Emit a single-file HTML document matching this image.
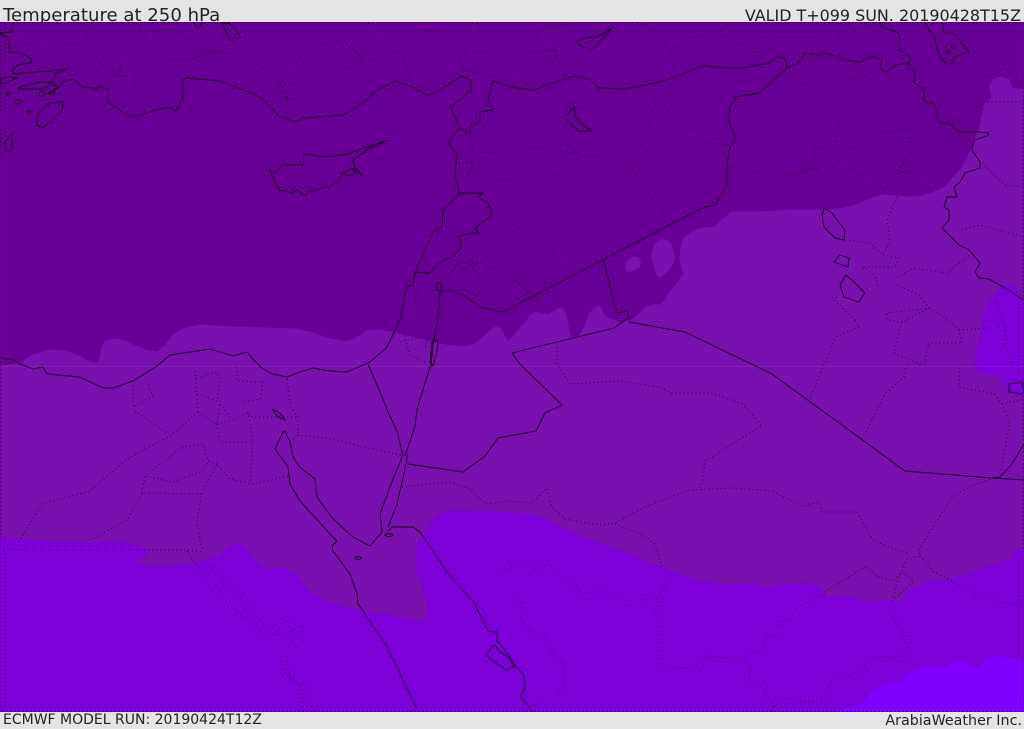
<!DOCTYPE html>
<html><head><meta charset="utf-8"><style>
html,body{margin:0;padding:0;background:#e4e4e4}
#w{position:relative;width:1024px;height:729px;overflow:hidden;background:#e4e4e4;font-family:"DejaVu Sans","Liberation Sans",sans-serif;color:#222}
.t{position:absolute;white-space:nowrap;line-height:1}
svg{position:absolute;left:0;top:22px}
</style></head><body><div id="w">
<div class="t" style="left:3px;top:6.5px;font-size:18.1px">Temperature at 250 hPa</div>
<div class="t" style="right:3px;top:8px;font-size:15.95px">VALID T+099 SUN. 20190428T15Z</div>
<div class="t" style="left:3px;top:713px;font-size:14px">ECMWF MODEL RUN: 20190424T12Z</div>
<div class="t" style="right:2px;top:714px;font-size:14.3px">ArabiaWeather Inc.</div>
<svg width="1024" height="690" viewBox="0 22 1024 690">
<rect x="0" y="22" width="1024" height="690" fill="#680095"/>
<polygon fill="#7a10ad" stroke="#7a10ad" stroke-linejoin="round" points="0,366 20,363 32,355 50,350 65,351 77,355 90,362 97,364 100,358 102,347 106,341 113,339 122,340 133,345 145,350 157,352 165,346 172,336 180,330 190,327 200,325 215,326 233,327 265,328 293,329 310,332 330,339 347,342 357,338 367,331 378,330 390,332 410,337 427,341 445,345 463,347 473,345 480,340 490,331 497,326 501,329 503,333 507,342 512,338 518,331 525,323 530,316 535,312 542,314 549,315 556,310 562,308 565,313 567,320 569,331 570,337 575,339 579,337 585,325 590,313 595,308 600,306 602,310 604,315 610,319 619,322 629,322 637,316 645,308 652,305 660,305 665,300 669,293 676,285 684,273 681,265 680,257 681,247 684,238 693,232 702,228 715,227 723,219 732,212 762,212 795,210 829,210 845,208 859,204 870,199 882,195 895,196 909,197 922,196 932,193 945,187 953,178 962,168 971,150 979,130 982,116 985,103 989,101 992,97 990,91 990,85 994,79 999,77 1006,78 1009,80 1011,85 1012,88 1016,89 1024,89 1024,712 0,712"/>
<polygon fill="#7a10ad" points="625,267 628,260 632,257 637,257 641,261 640,267 635,270 629,272 626,271"/>
<polygon fill="#7a10ad" points="651,257 652,250 655,243 660,240 664,239 669,241 672,245 674,252 675,258 673,264 669,270 664,275 659,278 656,274 654,267"/>
<polygon fill="#7d00d9" stroke="#7d00d9" stroke-linejoin="round" points="0,537 33,541 80,543 117,542 135,545 147,549 147,554 141,558 135,562 150,566 177,566 195,563 213,559 221,555 227,549 232,545 237,543 243,546 248,551 255,561 263,569 272,570 283,568 292,572 300,579 306,587 313,594 325,601 337,606 360,610 383,614 402,618 420,622 425,621 429,611 426,600 423,587 418,575 416,564 416,553 418,544 427,530 437,516 445,512 457,511 485,512 512,513 530,515 542,518 565,530 585,539 606,546 629,554 650,563 669,571 692,579 708,582 725,585 752,584 769,588 785,585 802,583 812,584 819,587 823,592 827,596 845,596 867,602 885,601 905,601 905,592 917,588 929,581 949,580 969,574 990,566 1012,559 1015,551 1024,547 1024,712 0,712"/>
<polygon fill="#7d00d9" stroke="#7d00d9" stroke-linejoin="round" points="975,366 977,350 982,327 985,310 993,298 1002,287 1012,285 1024,300 1024,397 1012,392 1005,384 1000,378 995,374 985,373 979,371 975,366"/>
<polygon fill="#7f00ff" stroke="#7f00ff" stroke-linejoin="round" points="840,711 852,707 862,704 867,698 872,692 882,686 900,682 906,677 912,672 925,668 945,668 950,664 955,661 965,663 972,667 979,668 983,664 987,657 1000,657 1024,660 1024,712 840,712"/>
<rect x="0" y="366" width="1024" height="1" fill="#fff" opacity=".08"/>

<g fill="none" stroke="#000" stroke-width="1" stroke-linejoin="round" stroke-dasharray="1 3" opacity=".8">
<rect x=".5" y="22.5" width="1023" height="689"/>
<polyline points="13,30 25,43 50,48 77,43 107,68 117,76 137,76 150,62 187,60 222,50 224,52 250,58 277,80 287,93 288,110 287,118"/>
<polyline points="92,23 93,33 80,43"/>
<polyline points="137,23 140,33 170,30 190,40 200,52 222,50 222,33"/>
<polyline points="117,75 132,43 147,33"/>
<polyline points="138,75 132,87 118,103"/>
<polyline points="277,88 287,72 307,50 343,39 353,50 365,62 333,72 310,80 280,88"/>
<polyline points="280,90 288,100 313,95 305,83"/>
<polyline points="365,62 400,50 402,38 420,30 440,32"/>
<polyline points="368,23 380,37 383,53"/>
<polyline points="400,52 413,82"/>
<polyline points="477,23 478,37 460,55 463,70 500,77"/>
<polyline points="473,52 512,55 555,50 565,80"/>
<polyline points="534,37 545,27 572,24"/>
<polyline points="534,37 555,50"/>
<polyline points="669,50 659,33 635,22"/>
<polyline points="669,50 675,73"/>
<polyline points="669,50 692,37 719,33 729,22"/>
<polyline points="719,33 739,45 759,37 819,38 822,27"/>
<polyline points="839,37 875,23"/>
<polyline points="754,60 759,45"/>
<polyline points="512,75 535,90"/>
<polyline points="472,133 472,163 483,152 512,155 522,146 579,154 627,162 647,137 655,100 639,90"/>
<polyline points="597,90 595,100 575,110"/>
<polyline points="655,100 689,128 709,143 732,145"/>
<polyline points="579,154 577,167 564,178 545,168 512,180 477,182 468,175 473,163 458,163"/>
<polyline points="627,162 637,177 652,200 675,222"/>
<polyline points="565,130 565,143 577,153"/>
<polyline points="512,223 539,243 549,253 579,270"/>
<polyline points="512,273 532,290"/>
<polyline points="477,250 470,262 480,280 478,296 465,290"/>
<polyline points="441,288 458,263 480,263 510,276 538,300"/>
<polyline points="419,290 412,310 404,335 410,355 425,362"/>
<polyline points="400,342 428,335 425,350"/>
<polyline points="727,165 775,177 820,168 795,172 794,190 809,203 819,208"/>
<polyline points="787,68 799,83 812,87 834,77 855,80 855,70 885,87 860,103 837,123 837,140 814,152 820,168"/>
<polyline points="860,137 910,128 910,153 885,190 875,182 839,163 835,153 855,147 860,137"/>
<polyline points="900,103 905,125"/>
<polyline points="902,172 917,173 932,192"/>
<polyline points="897,197 887,220 890,243 882,255 899,258 895,267 862,267 875,275 879,288"/>
<polyline points="845,240 870,243 882,255"/>
<polyline points="897,277 914,268 947,273 972,253"/>
<polyline points="897,285 919,295 929,308 887,313 887,320 902,322 929,308 942,315 959,330 962,343 929,343 924,365"/>
<polyline points="902,322 895,347 894,353 922,365"/>
<polyline points="855,320 832,298 840,297"/>
<polyline points="855,320 859,327 835,337 825,365"/>
<polyline points="959,330 1005,327 995,300"/>
<polyline points="1005,327 1005,343 1012,365"/>
<polyline points="962,230 979,225 1024,237"/>
<polyline points="982,163 1005,185 1024,187"/>
<polyline points="952,120 985,102 1024,102"/>
<polyline points="939,57 969,67 985,78 1005,68 1024,85"/>
<polyline points="0,550 187,550 202,552"/>
<polyline points="15,549 42,504 90,491 127,459 170,436 198,412"/>
<polyline points="133,381 133,407 153,396 147,382"/>
<polyline points="135,411 168,434"/>
<polyline points="195,371 197,397 198,412"/>
<polyline points="197,394 217,401 220,381 217,372 195,379"/>
<polyline points="220,401 217,424 198,412"/>
<polyline points="217,424 220,442 252,442"/>
<polyline points="217,424 233,420 248,412 250,417 297,417"/>
<polyline points="220,404 233,420"/>
<polyline points="263,382 260,399 243,402"/>
<polyline points="237,367 237,381 263,382"/>
<polyline points="248,412 253,441 250,482"/>
<polyline points="287,379 290,406 298,417 298,434 290,442"/>
<polyline points="298,435 333,439 360,446 403,456"/>
<polyline points="288,476 253,484 230,479 217,464 202,492 197,521 202,552"/>
<polyline points="217,464 208,461 203,444 183,447 145,476 173,482 203,471 209,461"/>
<polyline points="145,476 142,493 202,494"/>
<polyline points="142,493 128,519 87,542"/>
<polyline points="207,564 233,591 263,624 270,627 287,621 302,627 303,641 287,657 290,677 307,687 313,711"/>
<polyline points="187,551 197,567 213,581 227,604 257,627 267,636 293,631 293,641 280,656 287,676 300,687 303,711"/>
<polyline points="402,487 450,482 470,489 485,504 512,501 532,503 547,488 552,507 565,519 599,525 615,523 645,507 689,490 732,488 772,491 802,506 819,502 822,512 857,512 874,541 909,554 899,577 892,601 890,614 905,636 909,656 872,657 855,674 832,679 824,701 802,702 782,697 772,711"/>
<polyline points="557,347 557,364 570,384 619,381 659,387 672,393 712,393 742,404 762,426 735,442 705,461 702,484 697,490"/>
<polyline points="615,524 645,536 655,544 662,567 672,577 659,597 655,614 662,621 662,664 665,670 695,666 709,656 739,659 764,649 764,637 775,637 779,622 789,621 799,607 825,592 865,567 879,577 892,581 902,572 914,581 892,601"/>
<polyline points="739,659 750,666 750,682 762,687 774,707"/>
<polyline points="657,599 625,601 602,591 582,594 572,581 555,574 550,564 535,569 522,564 512,567 500,574"/>
<polyline points="512,600 524,604 522,621 529,631 545,639 555,659 564,662 564,694 549,697 532,706"/>
<polyline points="990,479 965,489 952,497 935,524 919,549 920,556 909,559"/>
<polyline points="920,556 934,572 949,579 969,592 1002,602 1024,606"/>
<polyline points="1000,474 1010,424 1002,404 995,394 959,387 960,364"/>
<polyline points="1002,404 1024,399"/>
<polyline points="862,439 885,394 904,377 907,364"/>
<polyline points="810,399 824,364"/>
</g>

<g fill="none" stroke="#000" stroke-width=".9" stroke-linejoin="round" opacity=".9">
<polyline points="13,22 12,32 0,33 8,38 10,52 20,53 25,55 32,60 30,63 17,65 12,70 13,74 23,73 50,71 68,69 55,74 53,82 35,83 20,87 18,89 43,89 53,83 57,87 50,93 58,88 63,82 73,79 82,87 93,88 95,91 100,86 108,90 108,103 117,108 122,112 133,117 140,115 163,108 173,108 175,112 183,98 183,80 188,78 220,81 257,95 267,103 280,117 295,122 303,118 343,115 355,108 363,103 377,90 395,81 407,85 427,95 437,92 443,88 462,76 470,80 472,90 450,107 460,127 448,143 457,153 455,177 460,193 443,210 442,227 433,232 415,272 413,285 407,286 400,320 387,347 370,362 347,372 330,371 313,368 300,372 287,377 272,374 262,368 252,358 247,352 233,356 210,349 190,352 170,355 157,366 133,381 113,388 103,388 80,377 47,374 43,367 33,369 20,364 13,360 0,358"/>
<polyline points="368,364 385,404 388,412 397,431 403,456"/>
<polyline points="430,367 417,409 415,426 405,456"/>
<polyline points="408,454 405,469 397,504 388,527"/>
<polyline points="402,457 393,479 380,514 382,532 370,546 353,537 333,519 317,497 315,479 300,467 293,457 290,442 285,431 283,432 275,449 288,467 290,484 300,501 330,534 337,541 332,546 333,551 350,574 357,594 358,604 387,647 417,709"/>
<polyline points="388,531 392,527 413,527 420,532 437,557 450,576 473,601 488,631 497,632 497,641 505,650 512,661 524,676 525,689 520,696 529,707 532,711"/>
<polygon points="487,654 491,648 495,645 500,652 505,655 510,660 515,668 511,667 507,670 495,663 487,656"/>
<polyline points="512,353 614,328 629,317 627,311 617,313 614,303 603,258"/>
<polyline points="503,312 702,208 715,205 727,185 727,163 730,148 735,137 729,120 730,107 736,97 759,93 787,68"/>
<polyline points="503,312 480,307 463,295 448,290 440,293 437,327 433,343 431,367"/>
<polygon points="432,342 438,340 437,352 433,366 430,362"/>
<polyline points="414,272 430,273 438,263 450,258 462,247 458,237 473,233 479,233 475,228 492,215 488,203 478,197 483,193 460,193"/>
<polyline points="458,128 470,133 470,125 480,122 480,112 493,110 488,98 493,81 512,87 534,90 552,83 574,76 590,80 599,88 625,89 655,83 675,77 702,66 725,68 742,68 769,63 779,56 786,60 787,68 797,64 806,53 819,55 825,53 845,60 860,62 872,56 882,60 880,68 885,73 895,65 909,63"/>
<polyline points="880,22 882,27 899,33 900,50 910,57 909,68 915,72 914,82 924,90 924,102 934,103 939,123 949,123 959,132 977,132 989,133 987,136 974,140 972,150 980,162 980,168 965,173 960,182 954,187 957,197 947,197 944,207 949,210 949,220 942,228 959,245 969,250 980,263 975,272 979,278 989,279 1005,288 1024,300"/>
<polyline points="629,322 685,332 772,374 905,471 992,478 1024,480"/>
<polyline points="992,478 1000,477 1012,464 1024,444"/>
<polyline points="512,353 520,364 562,405 545,413 536,431 498,438 485,456 463,472 408,464"/>
<polygon points="270,170 275,183 280,190 293,193 297,190 305,196 308,192 320,189 338,183 342,173 353,168 363,176 355,167 353,160 367,150 388,140 367,147 347,154 327,157 304,154 303,165 283,165 275,173"/>
<polyline points="342,173 348,176 356,174 352,169"/>
<polygon points="63,102 50,103 38,113 37,125 42,128 53,120 62,110"/>
<polygon points="12,133 5,142 5,152 12,150"/>
<polygon points="0,80 7,77 17,78 8,82 0,84"/>
<polygon points="222,23 230,41 241,37 233,27 229,23"/>
<polyline points="193,22 198,28 203,22"/>
<polygon points="576,42 585,38 597,37 612,28 604,38 592,50 582,46"/>
<polygon points="574,107 565,117 572,126 580,132 592,130 585,127 576,118"/>
<polyline points="925,23 929,30 935,38 937,50 941,58 947,65 952,63 955,57 969,52 962,43 955,35 944,32 942,23"/>
<circle cx="948" cy="52" r="1.5"/><circle cx="953" cy="47" r="1.5"/>
<polygon points="824,208 822,215 824,227 835,238 844,240 845,230 837,220 832,213"/>
<polygon points="840,255 834,262 848,267 849,258"/>
<polygon points="846,275 840,285 844,297 859,302 865,293 855,283"/>
<ellipse cx="439" cy="287" rx="3" ry="4"/>
<polygon points="1009,384 1022,382 1024,391 1022,394 1009,392"/>
<polygon points="272,409 280,413 285,420 278,417"/>
<ellipse cx="8" cy="93" rx="2" ry="1.5"/>
<ellipse cx="42" cy="94" rx="2.5" ry="3"/>
<ellipse cx="52" cy="93" rx="3.5" ry="1.2"/>
<ellipse cx="18" cy="102" rx="3" ry="2"/>
<ellipse cx="29" cy="112" rx="3" ry="1"/>
<ellipse cx="358" cy="558" rx="3" ry="1.5"/>
<ellipse cx="389" cy="535" rx="4" ry="1.5"/>
</g>
</svg>
</div></body></html>
